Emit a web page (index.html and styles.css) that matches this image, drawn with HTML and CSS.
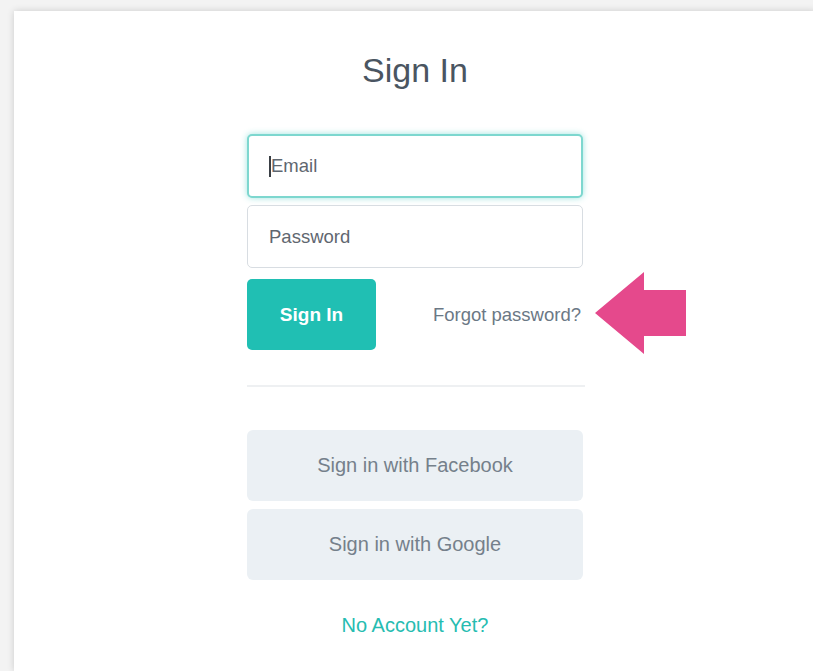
FILE: index.html
```html
<!DOCTYPE html>
<html lang="en">
<head>
<meta charset="utf-8">
<title>Sign In</title>
<link rel="stylesheet" href="styles.css">
</head>
<body>
<main class="card">
  <h1 class="title">Sign In</h1>
  <form class="form">
    <div class="field field-focus">
      <span class="caret"></span>
      <input class="input" type="email" placeholder="Email">
    </div>
    <div class="field">
      <input class="input" type="password" placeholder="Password">
    </div>
    <div class="actions">
      <button class="btn-primary" type="button">Sign In</button>
      <a class="forgot" href="#">Forgot password?</a>
    </div>
    <hr class="divider">
    <button class="btn-social" type="button">Sign in with Facebook</button>
    <button class="btn-social" type="button">Sign in with Google</button>
    <a class="signup" href="#">No Account Yet?</a>
  </form>
  <svg class="pointer" width="92" height="84" viewBox="0 0 92 84" aria-hidden="true">
    <polygon points="0,41 49,0 49,18 91,18 91,64 49,64 49,82" fill="#e5498c"/>
  </svg>
</main>
</body>
</html>
```

FILE: styles.css
```css
* {
  box-sizing: border-box;
}

html, body {
  margin: 0;
  height: 100%;
  overflow: hidden;
}

body {
  background: #f3f3f3;
  font-family: "Liberation Sans", Arial, sans-serif;
  padding: 11px 0 0 14px;
}

.card {
  position: relative;
  width: 802px;
  height: 660px;
  background: #ffffff;
  box-shadow: 0 0 7px rgba(0, 0, 0, 0.16);
  padding-top: 39px;
}

.title {
  margin: 0;
  text-align: center;
  font-size: 34px;
  line-height: 40px;
  font-weight: 400;
  color: #4a5561;
}

.form {
  width: 336px;
  margin: 44px auto 0;
  display: flex;
  flex-direction: column;
}

.field {
  display: flex;
  align-items: center;
  height: 63px;
  border: 1px solid #d8dde2;
  border-radius: 5px;
  padding-left: 21px;
  background: #fff;
}

.field + .field {
  margin-top: 7px;
}

.field-focus {
  height: 64px;
  border: 2px solid #7dd7cf;
  padding-left: 20px;
  box-shadow: 0 0 6px rgba(40, 195, 183, 0.45);
}

.caret {
  width: 2px;
  height: 21px;
  background: #3a3f45;
}

.input {
  flex: 1;
  border: 0;
  outline: 0;
  padding: 0;
  background: transparent;
  font-family: inherit;
  font-size: 18.5px;
  color: #555;
}

.input::placeholder {
  color: #5f6770;
  opacity: 1;
}

.actions {
  margin-top: 11px;
  display: flex;
  align-items: center;
  justify-content: space-between;
}

.btn-primary {
  width: 129px;
  height: 71px;
  border: 0;
  border-radius: 5px;
  background: #20bfb3;
  color: #ffffff;
  font-family: inherit;
  font-size: 19px;
  font-weight: 700;
  cursor: pointer;
}

.forgot {
  font-size: 18.5px;
  color: #6b7885;
  text-decoration: none;
  margin-right: 2px;
}

.divider {
  margin: 35px 0 0;
  border: 0;
  height: 2px;
  background: #eef0f2;
  width: 338px;
}

.btn-social {
  margin-top: 43px;
  height: 71px;
  border: 0;
  border-radius: 6px;
  background: #ebf0f4;
  color: #75808b;
  font-family: inherit;
  font-size: 20px;
  cursor: pointer;
}

.btn-social + .btn-social {
  margin-top: 8px;
}

.signup {
  margin-top: 33px;
  text-align: center;
  font-size: 20px;
  line-height: 24px;
  color: #26bcb1;
  text-decoration: none;
}

.pointer {
  position: absolute;
  left: 581px;
  top: 261px;
}
```
